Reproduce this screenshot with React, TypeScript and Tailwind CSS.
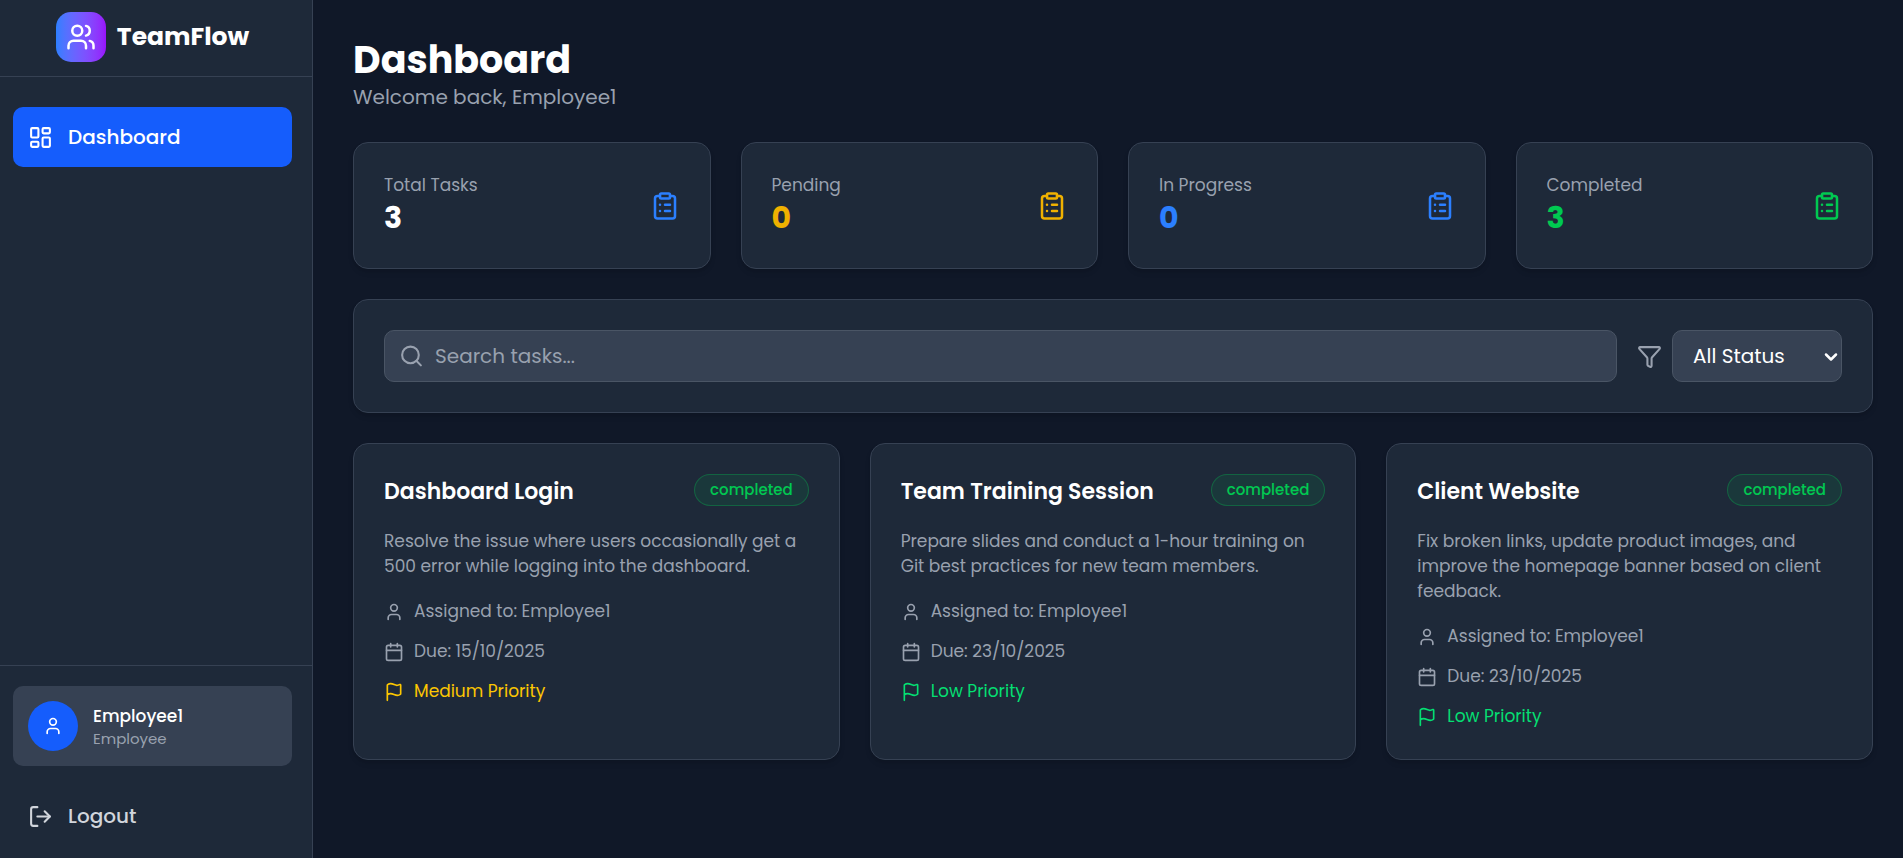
import {
  Calendar,
  ChevronDown,
  ClipboardList,
  Flag,
  Funnel,
  LayoutDashboard,
  LogOut,
  Search,
  User,
  Users,
} from "lucide-react";

type Stat = { label: string; value: number; valueColor: string; iconColor: string };
type Task = {
  title: string;
  status: string;
  description: string;
  assignee: string;
  due: string;
  priority: string;
  priorityColor: string;
};

const stats: Stat[] = [
  { label: "Total Tasks", value: 3, valueColor: "text-white", iconColor: "text-blue-500" },
  { label: "Pending", value: 0, valueColor: "text-yellow-500", iconColor: "text-yellow-500" },
  { label: "In Progress", value: 0, valueColor: "text-blue-500", iconColor: "text-blue-500" },
  { label: "Completed", value: 3, valueColor: "text-green-500", iconColor: "text-green-500" },
];

const tasks: Task[] = [
  {
    title: "Dashboard Login",
    status: "completed",
    description:
      "Resolve the issue where users occasionally get a 500 error while logging into the dashboard.",
    assignee: "Employee1",
    due: "15/10/2025",
    priority: "Medium Priority",
    priorityColor: "text-yellow-400",
  },
  {
    title: "Team Training Session",
    status: "completed",
    description:
      "Prepare slides and conduct a 1-hour training on Git best practices for new team members.",
    assignee: "Employee1",
    due: "23/10/2025",
    priority: "Low Priority",
    priorityColor: "text-green-400",
  },
  {
    title: "Client Website",
    status: "completed",
    description:
      "Fix broken links, update product images, and improve the homepage banner based on client feedback.",
    assignee: "Employee1",
    due: "23/10/2025",
    priority: "Low Priority",
    priorityColor: "text-green-400",
  },
];

function Sidebar() {
  return (
    <aside className="sticky top-0 flex h-screen w-[313px] shrink-0 flex-col border-r border-gray-700 bg-gray-800">
      <div className="flex items-center justify-center gap-[11px] border-b border-gray-700 pt-3 pr-[7px] pb-[14px]">
        <div className="flex size-[50px] items-center justify-center rounded-[15px] bg-linear-to-r from-blue-500 to-purple-600">
          <Users size={30} />
        </div>
        <span className="text-[25px] leading-[34px] font-bold">TeamFlow</span>
      </div>
      <nav className="flex-1 pt-[30px] pr-5 pl-[13px]">
        <a
          href="#dashboard"
          className="flex h-[60px] items-center gap-[15px] rounded-[10px] bg-blue-600 px-[15px] text-[20px] font-medium"
        >
          <LayoutDashboard size={25} />
          Dashboard
        </a>
      </nav>
      <div className="border-t border-gray-700 pt-5 pr-5 pb-3 pl-[13px]">
        <div className="flex items-center gap-[15px] rounded-[10px] bg-gray-700 p-[15px]">
          <div className="flex size-[50px] items-center justify-center rounded-full bg-blue-600">
            <User size={20} />
          </div>
          <div>
            <p className="text-[17px] leading-[25px] font-medium">Employee1</p>
            <p className="text-[15px] leading-[20px] text-gray-400">Employee</p>
          </div>
        </div>
        <button
          type="button"
          className="mt-5 flex h-[60px] w-full items-center gap-[15px] px-[15px] text-[20px] font-medium text-gray-300"
        >
          <LogOut size={25} />
          Logout
        </button>
      </div>
    </aside>
  );
}

function StatCard({ label, value, valueColor, iconColor }: Stat) {
  return (
    <div className="flex items-center justify-between rounded-[15px] border border-gray-700 bg-gray-800 p-[30px] shadow-md">
      <div>
        <p className="text-[17px] leading-[25px] text-gray-400">{label}</p>
        <p className={`text-[30px] leading-[40px] font-bold ${valueColor}`}>{value}</p>
      </div>
      <ClipboardList size={30} className={iconColor} />
    </div>
  );
}

function TaskCard({ title, status, description, assignee, due, priority, priorityColor }: Task) {
  return (
    <article className="rounded-[15px] border border-gray-700 bg-gray-800 p-[30px] shadow-md">
      <div className="flex items-start justify-between">
        <h2 className="text-[22px] leading-[35px] font-semibold">{title}</h2>
        <span className="rounded-full border border-green-500/30 bg-green-500/10 px-[15px] py-[5px] text-[15px] leading-[20px] font-medium text-green-500">
          {status}
        </span>
      </div>
      <p className="mt-5 text-[17px] leading-[25px] text-gray-400">{description}</p>
      <ul className="mt-5 flex flex-col gap-[15px] text-[17px] leading-[25px] text-gray-400">
        <li className="flex items-center gap-[10px]">
          <User size={20} />
          <span>Assigned to: {assignee}</span>
        </li>
        <li className="flex items-center gap-[10px]">
          <Calendar size={20} />
          <span>Due: {due}</span>
        </li>
        <li className={`flex items-center gap-[10px] ${priorityColor}`}>
          <Flag size={20} />
          <span>{priority}</span>
        </li>
      </ul>
    </article>
  );
}

export default function App() {
  return (
    <div className="flex min-h-screen bg-gray-900 font-['Poppins','Inter',sans-serif] text-white">
      <Sidebar />
      <main className="min-w-0 flex-1 pt-[37px] pr-[30px] pb-[30px] pl-10">
        <header>
          <h1 className="text-[38px] leading-[45px] font-bold">Dashboard</h1>
          <p className="text-[20px] leading-[30px] text-gray-400">Welcome back, Employee1</p>
        </header>

        <section className="mt-[30px] grid grid-cols-4 gap-[30px]">
          {stats.map((stat) => (
            <StatCard key={stat.label} {...stat} />
          ))}
        </section>

        <section className="mt-[30px] flex items-center gap-5 rounded-[15px] border border-gray-700 bg-gray-800 p-[30px] shadow-md">
          <div className="relative flex-1">
            <Search
              size={25}
              className="pointer-events-none absolute top-1/2 left-[15px] -translate-y-1/2 text-gray-400"
            />
            <input
              type="text"
              aria-label="Search tasks"
              placeholder="Search tasks..."
              className="block h-[52px] w-full rounded-[10px] border border-gray-600 bg-gray-700 pr-5 pl-[50px] text-[20px] placeholder:text-gray-400"
            />
          </div>
          <div className="flex items-center gap-[10px]">
            <Funnel size={25} className="text-gray-400" />
            <div className="relative">
              <select
                aria-label="Filter by status"
                className="block h-[52px] w-[170px] appearance-none rounded-[10px] border border-gray-600 bg-gray-700 pr-6 pl-5 text-[20px]"
              >
                <option>All Status</option>
                <option>Pending</option>
                <option>In Progress</option>
                <option>Completed</option>
              </select>
              <ChevronDown
                size={20}
                strokeWidth={3}
                className="pointer-events-none absolute top-[17px] right-px"
              />
            </div>
          </div>
        </section>

        <section className="mt-[30px] grid grid-cols-3 gap-[30px]">
          {tasks.map((task) => (
            <TaskCard key={task.title} {...task} />
          ))}
        </section>
      </main>
    </div>
  );
}
